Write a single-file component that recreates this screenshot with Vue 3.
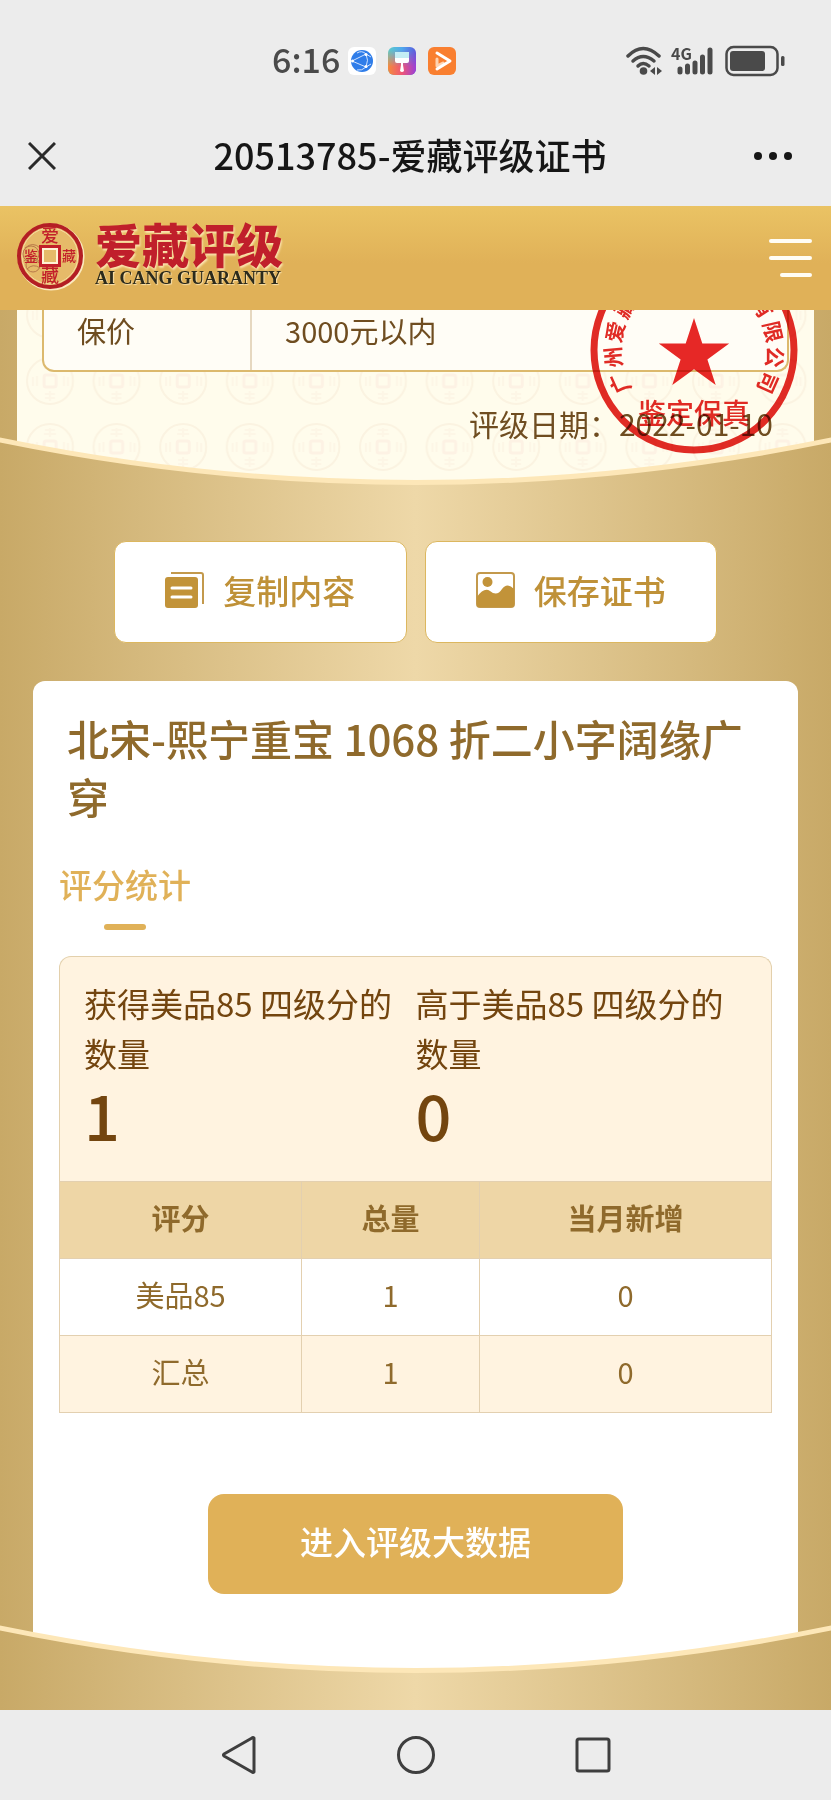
<script setup>
import { ref } from 'vue'

// 分数统计
const stats = ref([
  { label: '获得美品85 四级分的数量', value: 1 },
  { label: '高于美品85 四级分的数量', value: 0 }
])

const rows = ref([
  { grade: '美品85', total: 1, month: 0 },
  { grade: '汇总', total: 1, month: 0 }
])

// 印章环形文字及角度
const sealChars = [
  { char: '广', angle: -114 },
  { char: '州', angle: -95 },
  { char: '爱', angle: -77 },
  { char: '藏', angle: -58 },
  { char: '有', angle: 58 },
  { char: '限', angle: 77 },
  { char: '公', angle: 95 },
  { char: '司', angle: 114 }
]
</script>

<template>
  <div class="page">
    <!-- 状态栏 -->
    <div class="status-bar">
      <div class="status-left">
        <span class="time">6:16</span>
        <svg width="28" height="28" viewBox="0 0 28 28">
          <rect width="28" height="28" rx="6" fill="#fff" />
          <circle cx="14" cy="14" r="11" fill="#2f7de9" />
          <path d="M4 14 L18 7 M4 14 L18 20 M18 7 Q21 13 18 20 M9 6 Q14 3 18 7 M9 23 Q14 24 18 20 M18 7 L23 10 M18 20 L23 17" fill="none" stroke="#cfe2ff" stroke-width="1" />
          <circle cx="4.500" cy="14" r="1.500" fill="#fff" />
          <circle cx="18" cy="7.500" r="1.500" fill="#fff" />
          <circle cx="18" cy="19.500" r="1.500" fill="#fff" />
        </svg>
        <svg width="28" height="28" viewBox="0 0 28 28">
          <defs>
            <linearGradient id="brushA" x1="0" y1="0" x2="1" y2="0">
              <stop offset="0" stop-color="#5ecbc9" />
              <stop offset="0.5" stop-color="#4fa8ee" />
              <stop offset="1" stop-color="#5a5bdc" />
            </linearGradient>
            <linearGradient id="brushB" x1="0" y1="0" x2="1" y2="0">
              <stop offset="0" stop-color="#f58b3c" />
              <stop offset="0.5" stop-color="#ee5676" />
              <stop offset="1" stop-color="#9a3fd8" />
            </linearGradient>
            <linearGradient id="brushFade" x1="0" y1="0" x2="0" y2="1">
              <stop offset="0.1" stop-color="#fff" stop-opacity="0" />
              <stop offset="0.7" stop-color="#fff" />
            </linearGradient>
            <mask id="brushMask"><rect width="28" height="28" fill="url(#brushFade)" /></mask>
          </defs>
          <rect width="28" height="28" rx="6" fill="url(#brushA)" />
          <rect width="28" height="28" rx="6" fill="url(#brushB)" mask="url(#brushMask)" />
          <path d="M7 5 H21 V11 H7 Z" fill="#c4eef4" />
          <path d="M7 11 H21 V14 Q21 16 19 16 H15 V18 L16 24 Q14 26 12 24 L13 18 V16 H9 Q7 16 7 14 Z" fill="#fff" />
        </svg>
        <svg width="28" height="28" viewBox="0 0 28 28">
          <rect width="28" height="28" rx="6" fill="#f97f30" />
          <path d="M9 12 V19 L15 16" fill="none" stroke="#ffd3b0" stroke-width="3" stroke-linejoin="round" stroke-linecap="round" />
          <path d="M9 6 L22 14 L9 22" fill="none" stroke="#fff" stroke-width="3" stroke-linejoin="round" stroke-linecap="round" />
        </svg>
      </div>
      <div class="status-right">
        <svg width="38" height="30" viewBox="0 0 38 30">
          <g fill="none" stroke="#4a4a4a" stroke-width="3.500" stroke-linecap="round">
            <path d="M3 10 Q18 -5 34 10" />
            <path d="M8 15 Q18 6 29 15" />
            <path d="M13 20 Q18 15 24 20" />
          </g>
          <circle cx="18.500" cy="25" r="3.800" fill="#4a4a4a" />
          <path d="M25 25 L30 21 V29 Z M37 25 L32 21 V29 Z" fill="#4a4a4a" />
        </svg>
        <div class="signal">
          <span class="net">4G</span>
          <svg width="38" height="30" viewBox="0 0 38 30">
            <g stroke="#4a4a4a" stroke-width="5" stroke-linecap="round">
              <path d="M5 23 V26 M12.500 20 V26 M20 17 V26 M27.500 11 V26 M35 4 V26" />
            </g>
          </svg>
        </div>
        <svg width="60" height="32" viewBox="0 0 60 32">
          <rect x="1.500" y="2" width="51" height="28" rx="7" fill="none" stroke="#4a4a4a" stroke-width="2.500" />
          <rect x="5" y="6" width="35" height="20" rx="3" fill="#4a4a4a" />
          <rect x="56" y="11" width="3.500" height="10" rx="1.500" fill="#4a4a4a" />
        </svg>
      </div>
    </div>

    <!-- 标题栏 -->
    <div class="title-bar">
      <button class="icon-btn" aria-label="关闭">
        <svg width="28" height="28" viewBox="0 0 28 28">
          <path d="M1 1 L27 27 M27 1 L1 27" stroke="#2a2a2a" stroke-width="3" />
        </svg>
      </button>
      <h1>20513785-爱藏评级证书</h1>
      <button class="icon-btn" aria-label="更多">
        <svg width="38" height="28" viewBox="0 0 38 28">
          <g fill="#161616">
            <circle cx="4" cy="14" r="4" />
            <circle cx="19" cy="14" r="4" />
            <circle cx="34" cy="14" r="4" />
          </g>
        </svg>
      </button>
    </div>

    <!-- 品牌栏 -->
    <header class="brand-bar">
      <a class="brand" href="#">
        <svg class="logo" width="70" height="70" viewBox="0 0 70 70">
          <circle cx="36" cy="36" r="31" fill="none" stroke="#fbe9bd" stroke-width="5" />
          <circle cx="35" cy="35" r="31" fill="#e6ba69" stroke="#b41e24" stroke-width="4" />
          <circle cx="35" cy="35" r="28" fill="none" stroke="#f6dca2" stroke-width="1" />
          <g fill="none" stroke="#b8794a" stroke-width="1">
            <circle cx="16" cy="33" r="8" />
            <circle cx="18" cy="44" r="7" />
            <path d="M10 27 Q18 20 25 27 M9 40 Q15 33 24 42 M12 48 Q18 42 25 47" />
          </g>
          <rect x="26" y="26" width="18" height="18" fill="none" stroke="#c3202a" stroke-width="4" />
          <rect x="28" y="28" width="14" height="14" fill="#e6ba69" stroke="#fff3d4" stroke-width="2" />
          <g fill="#c3202a" class="logo-glyph">
            <text x="35" y="21">爱</text>
            <text x="35" y="61">藏</text>
            <text x="16" y="40" class="small">鉴</text>
            <text x="54" y="40" class="small">藏</text>
          </g>
        </svg>
        <span class="brand-text">
          <strong>爱藏评级</strong>
          <em>AI CANG GUARANTY</em>
        </span>
      </a>
      <button class="menu-btn" aria-label="菜单">
        <i></i>
        <i></i>
        <i class="short"></i>
      </button>
    </header>

    <main>
      <!-- 证书 -->
      <section class="cert">
        <div class="cert-sheet">
          <svg class="coins" width="100%" height="100%">
            <defs>
              <pattern id="coin" x="0" y="38" width="66.600" height="66" patternUnits="userSpaceOnUse">
                <g fill="none" stroke="#fbf3e1" stroke-width="2">
                  <circle cx="33" cy="33" r="23" />
                  <rect x="27" y="27" width="12" height="12" rx="2" stroke="#fdf2e4" stroke-width="3" />
                  <path d="M28 16 H38 M27 20 H39 M33 14 V23 M28 46 H38 M28 50 H38 M33 43 V53 M16 29 V38 M20 28 V38 M47 28 V38 M51 29 V38" stroke="#fdf6e6" />
                </g>
              </pattern>
            </defs>
            <rect width="100%" height="100%" fill="url(#coin)" />
          </svg>
          <dl class="cert-row">
            <dt>保价</dt>
            <dd>3000元以内</dd>
          </dl>
          <p class="cert-date"><span>评级日期：</span><span>2022-01-10</span></p>
          <svg class="seal" width="208" height="208" viewBox="-104 -104 208 208">
            <circle r="100" fill="none" stroke="#e02b26" stroke-width="7" />
            <path d="M0 -32 L8.300 -6.400 L35.200 -6.400 L13.400 9.400 L21.700 35 L0 19.200 L-21.700 35 L-13.400 9.400 L-35.200 -6.400 L-8.300 -6.400 Z" fill="#e62827" />
            <text v-for="item in sealChars" :key="item.angle" y="-73" :transform="`rotate(${item.angle})`">{{ item.char }}</text>
            <text y="74" class="seal-title">鉴定保真</text>
          </svg>
        </div>
        <svg class="arc arc-cert" viewBox="0 0 831 54" preserveAspectRatio="none">
          <defs>
            <linearGradient id="gold" gradientUnits="userSpaceOnUse" x1="0" y1="0" x2="831" y2="0">
              <stop offset="0" stop-color="#c8a967" />
              <stop offset="0.5" stop-color="#eed8a8" />
              <stop offset="1" stop-color="#c8a967" />
            </linearGradient>
          </defs>
          <path d="M0 4 Q415.500 90 831 4 V54 H0 Z" fill="url(#gold)" />
          <path d="M-5 3 Q415.500 90 836 3" fill="none" stroke="#fde7b8" stroke-width="5" />
        </svg>
      </section>

      <div class="actions">
        <button>
          <svg width="40" height="38" viewBox="0 0 40 38">
            <path d="M6 2 H36 Q38 2 38 4 V33" fill="none" stroke="#c3994c" stroke-width="2" />
            <rect x="0" y="6" width="33" height="31" rx="3" fill="#c29339" />
            <path d="M7 17 H26 M7 26 H26" stroke="#fff" stroke-width="3" stroke-linecap="round" />
          </svg>
          复制内容
        </button>
        <button>
          <svg width="40" height="38" viewBox="0 0 40 38">
            <rect x="1" y="2" width="37" height="34" rx="3" fill="#fff" stroke="#c3994c" stroke-width="2" />
            <circle cx="11.500" cy="11" r="5" fill="#c29339" />
            <path d="M1 26 Q8 16 14 20 Q21 26 26 18 Q31 11 38 18 V34 Q38 36 36 36 H3 Q1 36 1 34 Z" fill="#c29339" />
          </svg>
          保存证书
        </button>
      </div>

      <section class="card">
        <h2>北宋-熙宁重宝 1068 折二小字阔缘广穿</h2>
        <div class="tab">评分统计</div>
        <div class="stats">
          <div v-for="item in stats" :key="item.label" class="stat">
            <p>{{ item.label }}</p>
            <strong>{{ item.value }}</strong>
          </div>
        </div>
        <table>
          <thead>
            <tr>
              <th class="col-grade">评分</th>
              <th class="col-total">总量</th>
              <th>当月新增</th>
            </tr>
          </thead>
          <tbody>
            <tr v-for="row in rows" :key="row.grade">
              <td>{{ row.grade }}</td>
              <td>{{ row.total }}</td>
              <td>{{ row.month }}</td>
            </tr>
          </tbody>
        </table>
        <button class="enter-btn">进入评级大数据</button>
      </section>

      <svg class="arc arc-bottom" viewBox="0 0 831 86" preserveAspectRatio="none">
        <path d="M0 4 Q415.500 90 831 4 V86 H0 Z" fill="url(#gold)" />
        <path d="M-5 3 Q415.500 90 836 3" fill="none" stroke="#fde7b8" stroke-width="5" />
      </svg>
    </main>

    <!-- 系统导航 -->
    <nav class="sys-nav">
      <button class="icon-btn" aria-label="返回">
        <svg width="40" height="40" viewBox="0 0 40 40">
          <path d="M35 3 V37 Q34 38 33 37 L5 21 Q4 20 5 19 L33 3 Q34 2 35 3 Z" fill="none" stroke="#3e3e3e" stroke-width="3" stroke-linejoin="round" />
        </svg>
      </button>
      <button class="icon-btn" aria-label="主页">
        <svg width="40" height="40" viewBox="0 0 40 40">
          <circle cx="20" cy="20" r="17.500" fill="none" stroke="#3e3e3e" stroke-width="3" />
        </svg>
      </button>
      <button class="icon-btn" aria-label="最近任务">
        <svg width="40" height="40" viewBox="0 0 40 40">
          <rect x="4" y="4" width="32" height="32" rx="2" fill="none" stroke="#3e3e3e" stroke-width="3" />
        </svg>
      </button>
    </nav>
  </div>
</template>

<style>
body {
  margin: 0;
  background: #ececec;
}
</style>

<style scoped>
* {
  box-sizing: border-box;
}

.page {
  font-family: 'Noto Sans CJK SC', 'Noto Sans', sans-serif;
  color: #6f4d20;
}

svg {
  display: block;
  flex: none;
}

button {
  font-family: inherit;
  cursor: pointer;
}

.icon-btn {
  display: flex;
  padding: 0;
  border: none;
  background: none;
}

/* ==================== 状态栏 ==================== */
.status-bar {
  display: flex;
  justify-content: space-between;
  align-items: center;
  padding: 36px 46px 0 272px;
  height: 86px;
}

.status-left,
.status-right {
  display: flex;
  align-items: center;
  gap: 12px;
}

.time {
  padding-bottom: 4px;
  font-size: 34px;
  line-height: 46px;
  font-weight: 500;
  color: #4a4a4a;
  margin-right: -4px;
}

.signal {
  position: relative;
}

.net {
  position: absolute;
  top: -1px;
  left: -4px;
  font-size: 16px;
  line-height: 16px;
  font-weight: 700;
  color: #4a4a4a;
}

/* ==================== 标题栏 ==================== */
.title-bar {
  display: flex;
  justify-content: space-between;
  align-items: center;
  height: 120px;
  padding: 20px 39px 0 28px;
}

h1 {
  margin: 0;
  padding: 0 0 4px 10px;
  font-size: 36px;
  line-height: 52px;
  font-weight: 500;
  color: #161616;
}

/* ==================== 品牌栏 ==================== */
.brand-bar {
  display: flex;
  justify-content: space-between;
  align-items: center;
  height: 104px;
  padding: 0 19px 0 15px;
  background: linear-gradient(#eac364, #e0b158 55%, #e0b158);
}

.brand {
  display: flex;
  align-items: center;
  gap: 10px;
  text-decoration: none;
}

.logo {
  margin-bottom: 4px;
}

.logo-glyph text {
  font-size: 18px;
  font-weight: 500;
  text-anchor: middle;
}

.logo-glyph .small {
  font-size: 14px;
}

.brand-text {
  display: flex;
  flex-direction: column;
  padding-bottom: 6px;
}

.brand-text strong {
  font-size: 47px;
  line-height: 46px;
  font-weight: 900;
  color: #c01f2b;
  text-shadow: 1px 2px 2px #fbe3ae;
}

.brand-text em {
  font-family: 'Liberation Serif', serif;
  font-size: 18px;
  line-height: 24px;
  font-style: normal;
  font-weight: 700;
  color: #2b2a1c;
  text-shadow: 1px 1px 1px #fbe3ae;
}

.menu-btn {
  display: flex;
  flex-direction: column;
  align-items: flex-end;
  gap: 13px;
  padding: 0;
  border: none;
  background: none;
}

.menu-btn i {
  width: 43px;
  height: 4px;
  border-radius: 2px;
  background: #fffdf5;
}

.menu-btn .short {
  width: 32px;
}

/* ==================== 主体 ==================== */
main {
  position: relative;
  padding-bottom: 36px;
  background: linear-gradient(90deg, #c8a967, #eed8a8 50%, #c8a967);
}

.arc {
  position: absolute;
  left: 0;
  bottom: 0;
  width: 100%;
}

.arc-cert {
  height: 54px;
}

.arc-bottom {
  height: 86px;
}

.cert {
  position: relative;
  overflow: hidden;
  padding: 0 17px;
}

.cert-sheet {
  position: relative;
  padding: 0 25px 47px;
  background: #fffcec;
  font-size: 29px;
  line-height: 40px;
}

.coins {
  position: absolute;
  inset: 0;
}

.cert-row {
  position: relative;
  display: flex;
  margin: 0;
  border: 2px solid #dcb96d;
  border-top: none;
  border-radius: 0 0 12px 12px;
  background: #fffdf6;
}

.cert-row dt {
  width: 28%;
  padding: 0 0 20px 33px;
  border-right: 2px solid #e6d8c0;
}

.cert-row dd {
  margin: 0;
  padding: 0 0 20px 33px;
}

.cert-date {
  position: relative;
  display: flex;
  justify-content: flex-end;
  margin: 31px 16px 0 0;
  font-size: 30px;
}

.seal {
  position: absolute;
  top: -64px;
  right: 16px;
  mix-blend-mode: multiply;
}

.seal text {
  font-size: 21px;
  font-weight: 700;
  fill: #e02b26;
  text-anchor: middle;
}

.seal .seal-title {
  font-size: 28px;
  font-weight: 500;
}

/* ==================== 操作按钮 ==================== */
.actions {
  display: flex;
  gap: 18px;
  padding: 51px 114px 38px;
}

.actions button {
  flex: 1;
  display: flex;
  justify-content: center;
  align-items: center;
  gap: 18px;
  height: 102px;
  padding: 0 0 4px;
  border: 1px solid #dcb75f;
  border-radius: 12px;
  background: #fff;
  color: #bf9138;
  font-size: 33px;
  font-weight: 500;
}

/* ==================== 评分卡片 ==================== */
.card {
  margin: 0 33px;
  padding: 28px 26px 80px;
  border-radius: 12px 12px 0 0;
  background: #fff;
}

h2 {
  margin: 0 8px;
  font-size: 42px;
  line-height: 58px;
  font-weight: 500;
  color: #8f6a2c;
}

.tab {
  display: flex;
  flex-direction: column;
  align-items: center;
  gap: 18px;
  width: fit-content;
  margin: 37px 0 26px;
  font-size: 33px;
  line-height: 44px;
  font-weight: 500;
  color: #e0b158;
}

.tab::after {
  content: '';
  width: 42px;
  height: 6px;
  border-radius: 3px;
  background: #e0b158;
}

.stats {
  display: flex;
  padding: 21px 24px 31px;
  border: 1px solid #e3d0ac;
  border-bottom: none;
  border-radius: 12px 12px 0 0;
  background: #fff3e0;
  color: #73450f;
}

.stat {
  flex: 1;
}

.stat p {
  margin: 0;
  font-size: 33px;
  line-height: 50px;
}

.stat strong {
  display: block;
  font-size: 63px;
  line-height: 72px;
  font-weight: 500;
}

table {
  width: 100%;
  table-layout: fixed;
  border-collapse: collapse;
  font-size: 29px;
  line-height: 44px;
  text-align: center;
  color: #8f6a2c;
}

th,
td {
  padding: 13px 0 19px;
  border: 1px solid #e3d0b0;
}

th {
  background: #eed6a6;
  font-weight: 700;
}

.col-grade {
  width: 34%;
}

.col-total {
  width: 25%;
}

tbody tr:nth-child(even) {
  background: #fff3e0;
}

.enter-btn {
  display: block;
  width: calc(100% - 298px);
  height: 100px;
  margin: 81px auto 0;
  padding: 0 0 6px;
  border: none;
  border-radius: 16px;
  background: #e0b158;
  color: #fff;
  font-size: 33px;
  font-weight: 500;
}

/* ==================== 系统导航 ==================== */
.sys-nav {
  display: flex;
  justify-content: center;
  align-items: center;
  gap: 137px;
  height: 90px;
  background: #ececec;
}
</style>
